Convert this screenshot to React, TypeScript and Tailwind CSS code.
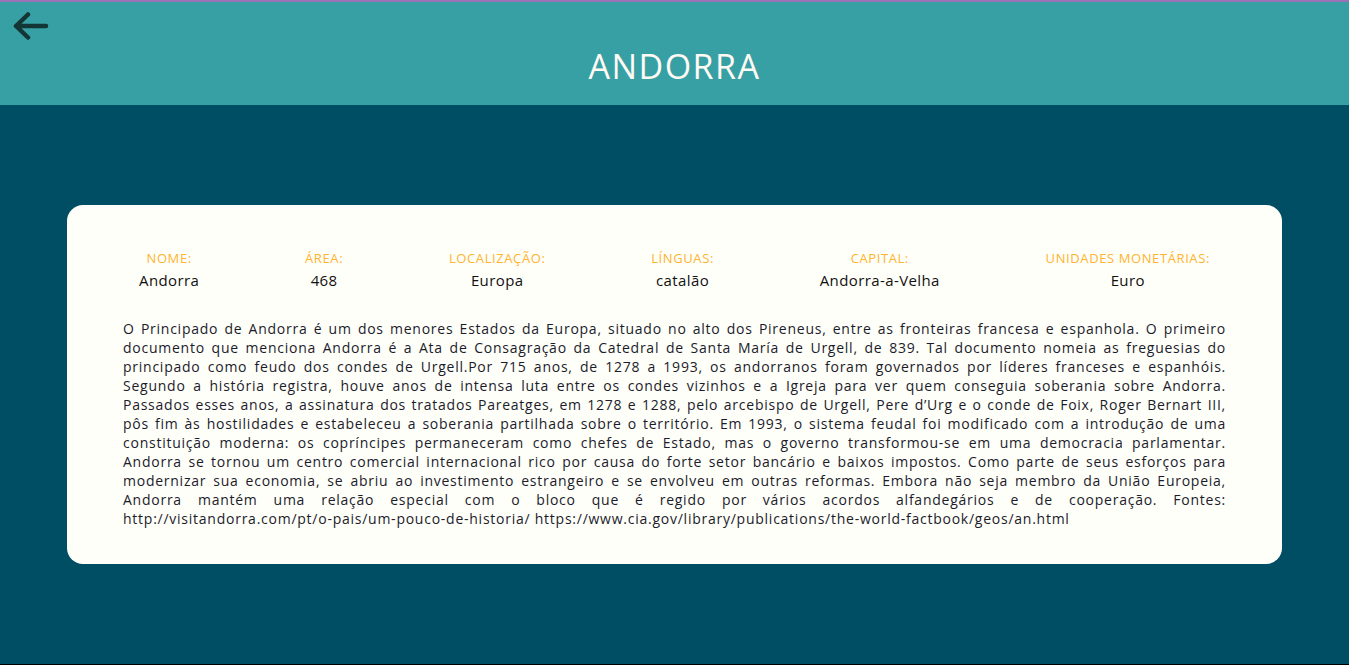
import React from 'react';

const font = { fontFamily: '"Open Sans", "Liberation Sans", sans-serif' };

const facts = [
  { label: 'NOME:', value: 'Andorra' },
  { label: 'ÁREA:', value: '468' },
  { label: 'LOCALIZAÇÃO:', value: 'Europa' },
  { label: 'LÍNGUAS:', value: 'catalão' },
  { label: 'CAPITAL:', value: 'Andorra-a-Velha' },
  { label: 'UNIDADES MONETÁRIAS:', value: 'Euro' },
];

const lines = [
  'O Principado de Andorra é um dos menores Estados da Europa, situado no alto dos Pireneus, entre as fronteiras francesa e espanhola. O primeiro',
  'documento que menciona Andorra é a Ata de Consagração da Catedral de Santa María de Urgell, de 839. Tal documento nomeia as freguesias do',
  'principado como feudo dos condes de Urgell.Por 715 anos, de 1278 a 1993, os andorranos foram governados por líderes franceses e espanhóis.',
  'Segundo a história registra, houve anos de intensa luta entre os condes vizinhos e a Igreja para ver quem conseguia soberania sobre Andorra.',
  'Passados esses anos, a assinatura dos tratados Pareatges, em 1278 e 1288, pelo arcebispo de Urgell, Pere d’Urg e o conde de Foix, Roger Bernart III,',
  'pôs fim às hostilidades e estabeleceu a soberania partilhada sobre o território. Em 1993, o sistema feudal foi modificado com a introdução de uma',
  'constituição moderna: os copríncipes permaneceram como chefes de Estado, mas o governo transformou-se em uma democracia parlamentar.',
  'Andorra se tornou um centro comercial internacional rico por causa do forte setor bancário e baixos impostos. Como parte de seus esforços para',
  'modernizar sua economia, se abriu ao investimento estrangeiro e se envolveu em outras reformas. Embora não seja membro da União Europeia,',
  'Andorra mantém uma relação especial com o bloco que é regido por vários acordos alfandegários e de cooperação. Fontes:',
];

function BackArrow() {
  return (
    <svg width="36" height="28" viewBox="0 0 36 28" fill="none">
      <path d="M3 14H33M15 2.5L3 14L15 25.5" stroke="#143536" strokeWidth="4.5" strokeLinecap="round" strokeLinejoin="round" />
    </svg>
  );
}

export default function App() {
  return (
    <div className="h-[665px] flex flex-col bg-[#004e64] border-b border-black overflow-hidden" style={font}>
      <header className="relative h-[105px] shrink-0 bg-[#37a0a4] border-t-2 border-[#9a72b8] flex items-center justify-center">
        <button className="absolute left-[13px] top-[10px]">
          <BackArrow />
        </button>
        <h1 className="text-[34px] font-medium text-[#fffaf3] tracking-[1.5px] mt-[26px]">ANDORRA</h1>
      </header>

      <main className="flex-1 px-[67px] pt-[100px]">
        <div className="bg-[#fffffa] rounded-[16px] px-[56px] pt-[44px] pb-[36px]">
          <div className="flex justify-between px-[16px]">
            {facts.map((f) => (
              <div key={f.label} className="flex flex-col items-center">
                <span className="text-[13px] text-[#ffb32e] leading-[18px] tracking-[0.6px]">{f.label}</span>
                <span className="text-[15px] font-medium text-[#111] leading-[22px] mt-[2px] tracking-[0.4px]">{f.value}</span>
              </div>
            ))}
          </div>

          <div className="mt-[28px] text-[14px] leading-[19px] text-[#1b1b2a] tracking-[0.75px]">
            {lines.map((l, i) => (
              <div key={i} className="text-justify [text-align-last:justify]">{l}</div>
            ))}
            <div>http://visitandorra.com/pt/o-pais/um-pouco-de-historia/ https://www.cia.gov/library/publications/the-world-factbook/geos/an.html</div>
          </div>
        </div>
      </main>
    </div>
  );
}
